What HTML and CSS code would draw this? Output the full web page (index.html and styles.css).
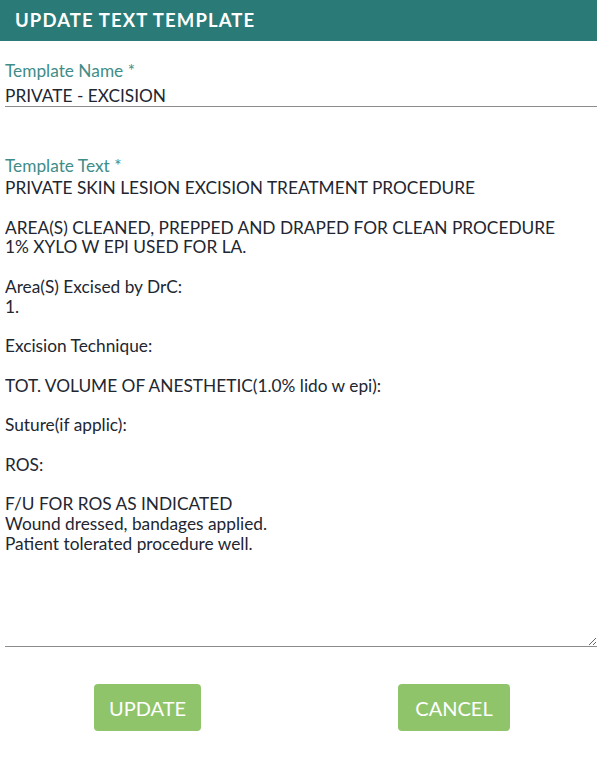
FILE: index.html
```html
<!DOCTYPE html>
<html>
<head>
<meta charset="utf-8">
<link rel="stylesheet" href="styles.css">
</head>
<body>
<div class="dialog">
  <div class="header">UPDATE TEXT TEMPLATE</div>
  <form class="form">
    <div class="field">
      <label class="label" for="tname">Template Name *</label>
      <input class="input" id="tname" type="text" value="PRIVATE - EXCISION">
    </div>
    <div class="field field-text">
      <label class="label" for="ttext">Template Text *</label>
      <textarea class="textarea" id="ttext">PRIVATE SKIN LESION EXCISION TREATMENT PROCEDURE

AREA(S) CLEANED, PREPPED AND DRAPED FOR CLEAN PROCEDURE
1% XYLO W EPI USED FOR LA.

Area(S) Excised by DrC:
1.

Excision Technique:

TOT. VOLUME OF ANESTHETIC(1.0% lido w epi):

Suture(if applic):

ROS:

F/U FOR ROS AS INDICATED
Wound dressed, bandages applied.
Patient tolerated procedure well.</textarea>
    </div>
    <div class="actions">
      <button type="button" class="btn btn-update">UPDATE</button>
      <button type="button" class="btn btn-cancel">CANCEL</button>
    </div>
  </form>
</div>
</body>
</html>
```
FILE: styles.css
```css
html, body {
  margin: 0;
  padding: 0;
  background: #ffffff;
}
body {
  font-family: Lato, "Open Sans", sans-serif;
  color: #222631;
}
.dialog {
  width: 597px;
}
.header {
  height: 41px;
  background: #2a7b78;
  color: #ffffff;
  font-weight: 700;
  font-size: 18.5px;
  letter-spacing: 1.1px;
  line-height: 40px;
  padding-left: 15px;
  box-sizing: border-box;
}
.form {
  padding: 0 0 0 5px;
}
.field {
  display: flex;
  flex-direction: column;
}
.field:first-child {
  padding-top: 20px;
}
.field-text {
  padding-top: 49px;
}
.label {
  color: #3f8d88;
  font-size: 17.3px;
  line-height: 20px;
}
.input, .textarea {
  font-family: Lato, "Open Sans", sans-serif;
  font-size: 17.3px;
  color: #222631;
  border: none;
  border-bottom: 1px solid #8c8c8c;
  padding: 0;
  margin: 0;
  outline: none;
  background: transparent;
}
.input {
  height: 26px;
  line-height: 20px;
  padding-top: 3px;
  box-sizing: border-box;
}
.textarea {
  line-height: 19.75px;
  height: 471px;
  box-sizing: border-box;
  padding-top: 2px;
  resize: vertical;
  overflow: hidden;
}
.actions {
  display: flex;
  padding: 37px 0 0 89px;
  gap: 197px;
}
.btn {
  height: 47px;
  border: none;
  border-radius: 4px;
  background: #8fc46b;
  color: #ffffff;
  font-family: Lato, "Open Sans", sans-serif;
  font-size: 20px;
  padding: 0;
}
.btn-update {
  width: 107px;
}
.btn-cancel {
  width: 112px;
}
```
